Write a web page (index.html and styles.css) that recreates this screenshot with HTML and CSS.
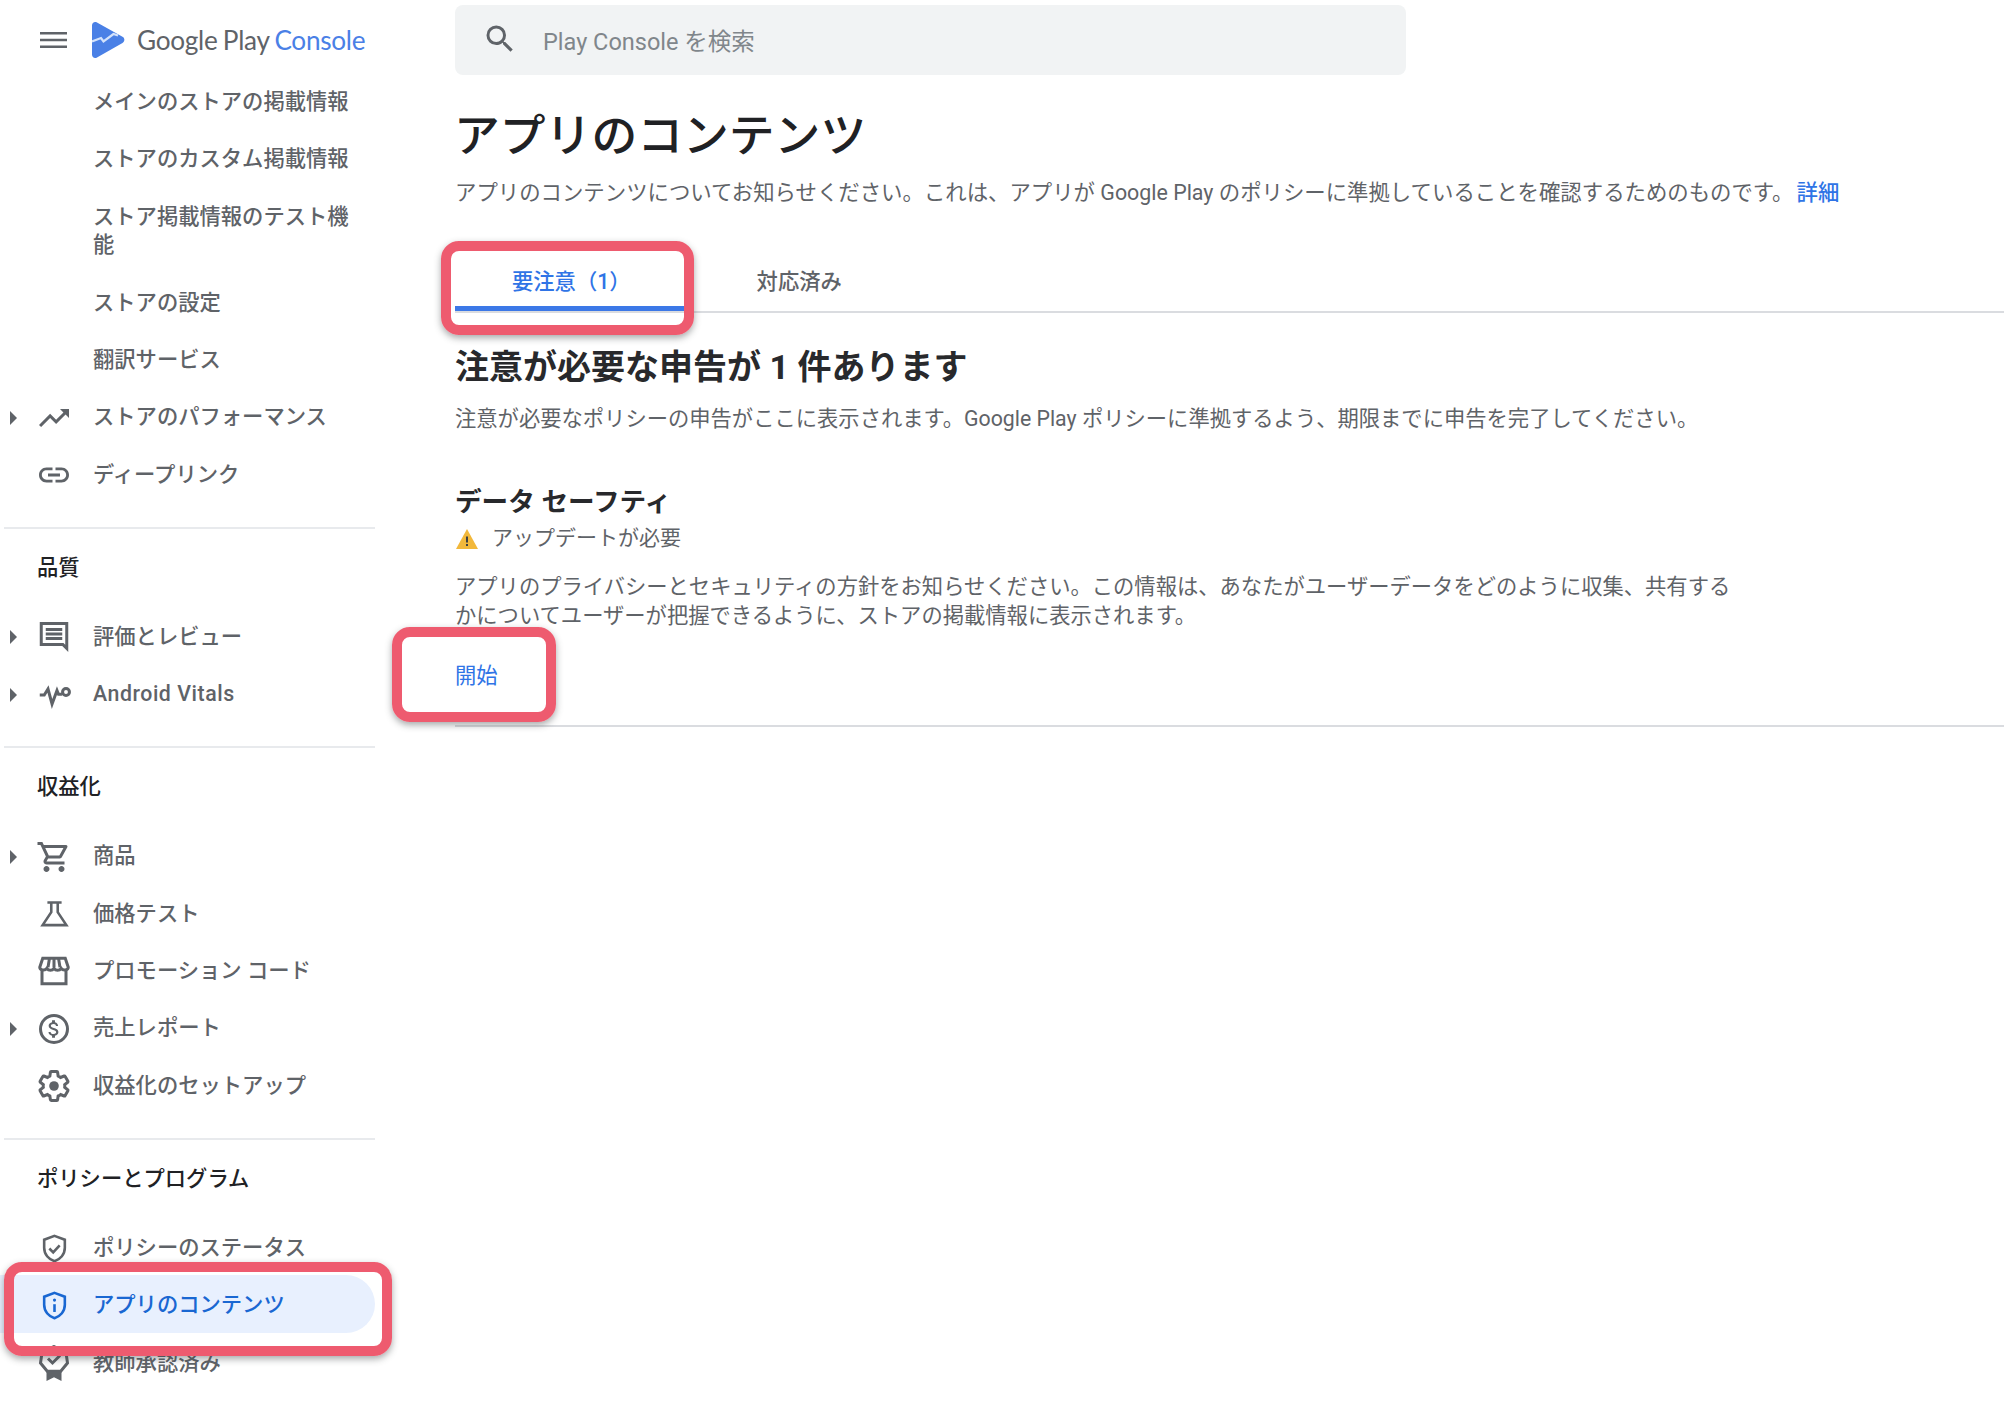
FILE: index.html
```html
<!DOCTYPE html>
<html lang="ja">
<head>
<meta charset="utf-8">
<title>アプリのコンテンツ</title>
<link rel="stylesheet" href="styles.css">
</head>
<body>
<div class="page">
  <aside class="sidebar">
    <header class="brand">
      <svg class="menu-icon" viewBox="0 0 27 18"><path d="M0 1h27v2.4H0zM0 7.8h27v2.4H0zM0 14.6h27V17H0z"/></svg>
      <svg class="logo" viewBox="0 0 33 36"><path d="M0 3.5C0 .8 2.6-.8 5 .6l25.5 14.2c2.5 1.4 2.5 4.7 0 6.1L5 35.400C2.600 36.800 0 35.200 0 32.500z" fill="#4a80e6"/><path d="M0 19.500l9-3.500 2.500 3.500 10-7.500 4.500 1.500" fill="none" stroke="#d3e2fb" stroke-width="2.200"/></svg>
      <span class="wordmark">Google Play <span class="wordmark-accent">Console</span></span>
    </header>
    <nav>
      <a class="nav-item"><span class="arrow-slot"></span><span class="icon-slot"></span><span class="nav-label">メインのストアの掲載情報</span></a>
      <a class="nav-item"><span class="arrow-slot"></span><span class="icon-slot"></span><span class="nav-label">ストアのカスタム掲載情報</span></a>
      <a class="nav-item"><span class="arrow-slot"></span><span class="icon-slot"></span><span class="nav-label">ストア掲載情報のテスト機能</span></a>
      <a class="nav-item"><span class="arrow-slot"></span><span class="icon-slot"></span><span class="nav-label">ストアの設定</span></a>
      <a class="nav-item"><span class="arrow-slot"></span><span class="icon-slot"></span><span class="nav-label">翻訳サービス</span></a>
      <a class="nav-item"><span class="arrow-slot"><i class="arrow"></i></span><span class="icon-slot"><svg class="icon" viewBox="0 0 24 24"><path d="M16 6l2.290 2.290-4.880 4.880-4-4L2 16.590 3.410 18l6-6 4 4 6.300-6.290L22 12V6z"/></svg></span><span class="nav-label">ストアのパフォーマンス</span></a>
      <a class="nav-item"><span class="arrow-slot"></span><span class="icon-slot"><svg class="icon" viewBox="0 0 24 24"><path d="M3.900 12c0-1.710 1.390-3.100 3.100-3.100h4V7H7c-2.760 0-5 2.240-5 5s2.240 5 5 5h4v-1.900H7c-1.710 0-3.100-1.390-3.100-3.100zM8 13h8v-2H8v2zm9-6h-4v1.900h4c1.710 0 3.100 1.390 3.100 3.100s-1.390 3.100-3.100 3.100h-4V17h4c2.760 0 5-2.240 5-5s-2.240-5-5-5z"/></svg></span><span class="nav-label">ディープリンク</span></a>
    </nav>
    <hr class="nav-rule">
    <h3 class="nav-heading">品質</h3>
    <nav>
      <a class="nav-item"><span class="arrow-slot"><i class="arrow"></i></span><span class="icon-slot"><svg class="icon" viewBox="0 0 24 24"><path d="M2.500 2h19v20l-4-4h-15zM4.500 4v12h13.800l1.200 1.200V4zM6.500 6h11v2h-11zM6.500 9h11v2h-11zM6.500 12h11v2h-11z" fill-rule="evenodd"/></svg></span><span class="nav-label">評価とレビュー</span></a>
      <a class="nav-item"><span class="arrow-slot"><i class="arrow"></i></span><span class="icon-slot"><svg class="icon stroke" viewBox="0 0 24 24"><path d="M2.500 12h3l2.500-4 2.700 10 3.300-9 1 2.500h2.300"/><circle cx="20" cy="10" r="2.300"/></svg></span><span class="nav-label nav-label-latin">Android Vitals</span></a>
    </nav>
    <hr class="nav-rule">
    <h3 class="nav-heading">収益化</h3>
    <nav>
      <a class="nav-item"><span class="arrow-slot"><i class="arrow"></i></span><span class="icon-slot"><svg class="icon" viewBox="0 0 24 24"><path d="M15.550 13c.75 0 1.410-.41 1.750-1.030l3.580-6.490c.37-.66-.11-1.480-.87-1.480H5.210l-.94-2H1v2h2l3.600 7.590-1.350 2.440C4.520 15.370 5.480 17 7 17h12v-2H7l1.100-2h7.450zM6.160 6h12.150l-2.760 5H8.530L6.160 6zM7 18c-1.100 0-1.990.9-1.990 2S5.900 22 7 22s2-.9 2-2-.9-2-2-2zm10 0c-1.100 0-1.990.9-1.990 2s.89 2 1.990 2 2-.9 2-2-.9-2-2-2z"/></svg></span><span class="nav-label">商品</span></a>
      <a class="nav-item"><span class="arrow-slot"></span><span class="icon-slot"><svg class="icon icon-small stroke" viewBox="0 0 24 24"><path d="M6.500 3.500h11M9.500 3.500v7.500L2.800 21h18.400l-6.700-10V3.500"/></svg></span><span class="nav-label">価格テスト</span></a>
      <a class="nav-item"><span class="arrow-slot"></span><span class="icon-slot"><svg class="icon stroke" viewBox="0 0 24 24"><path d="M4.500 3.500h15l2 6c0 2-3.400 2.600-4.700.8-1.200 1.700-3.600 1.700-4.800 0-1.200 1.700-3.600 1.700-4.800 0-1.300 1.800-4.700 1.200-4.700-.8zM4 11.500v9h16v-9M9 3.500L8 9.500M15 3.500l1 6M12 3.500v6"/></svg></span><span class="nav-label">プロモーション コード</span></a>
      <a class="nav-item"><span class="arrow-slot"><i class="arrow"></i></span><span class="icon-slot"><svg class="icon" viewBox="0 0 24 24"><path d="M12 2a10 10 0 1 0 0 20 10 10 0 0 0 0-20zm0 2a8 8 0 1 1 0 16 8 8 0 0 1 0-16z"/><path transform="translate(4.200 4.200) scale(.65)" d="M11.800 10.900c-2.270-.59-3-1.200-3-2.150 0-1.090 1.010-1.850 2.700-1.850 1.780 0 2.440.85 2.500 2.100h2.210c-.07-1.720-1.120-3.300-3.210-3.810V3h-3v2.160c-1.940.42-3.500 1.680-3.500 3.610 0 2.310 1.910 3.460 4.700 4.130 2.500.6 3 1.480 3 2.410 0 .69-.49 1.790-2.700 1.790-2.060 0-2.870-.92-2.980-2.100h-2.200c.12 2.190 1.760 3.420 3.680 3.830V21h3v-2.150c1.950-.37 3.500-1.500 3.500-3.550 0-2.840-2.430-3.810-4.700-4.400z"/></svg></span><span class="nav-label">売上レポート</span></a>
      <a class="nav-item"><span class="arrow-slot"></span><span class="icon-slot"><svg class="icon stroke" viewBox="0 0 24 24"><path d="M19.140 12.940c.04-.3.06-.61.06-.94 0-.32-.02-.64-.07-.94l2.030-1.580c.18-.14.23-.41.12-.61l-1.920-3.320c-.12-.22-.37-.29-.59-.22l-2.390.96c-.5-.38-1.030-.7-1.620-.94l-.36-2.540c-.04-.24-.24-.41-.48-.41h-3.840c-.24 0-.43.17-.47.41l-.36 2.540c-.59.24-1.130.57-1.620.94l-2.390-.96c-.22-.08-.47 0-.59.22L2.740 8.870c-.12.21-.08.47.12.61l2.030 1.580c-.05.3-.09.63-.09.94s.02.64.07.94l-2.030 1.580c-.18.14-.23.41-.12.61l1.920 3.320c.12.22.37.29.59.22l2.390-.96c.5.38 1.030.7 1.620.94l.36 2.540c.05.24.24.41.48.41h3.840c.24 0 .44-.17.47-.41l.36-2.540c.59-.24 1.130-.56 1.620-.94l2.390.96c.22.08.47 0 .59-.22l1.920-3.320c.12-.22.07-.47-.12-.61l-2.010-1.580z"/><circle class="solid" cx="12" cy="12" r="3.200"/></svg></span><span class="nav-label">収益化のセットアップ</span></a>
    </nav>
    <hr class="nav-rule">
    <h3 class="nav-heading">ポリシーとプログラム</h3>
    <nav>
      <a class="nav-item"><span class="arrow-slot"></span><span class="icon-slot"><svg class="icon icon-small stroke" viewBox="0 0 24 24"><path d="M12 2.200l8 3v6.300c0 5-3.400 8.900-8 10.300-4.600-1.400-8-5.300-8-10.300V5.200z"/><path d="M8 12l3 3 5-5.500"/></svg></span><span class="nav-label">ポリシーのステータス</span></a>
      <a class="nav-item nav-item-active"><span class="arrow-slot"></span><span class="icon-slot"><svg class="icon icon-small stroke" viewBox="0 0 24 24"><path d="M12 2.200l8 3v6.300c0 5-3.400 8.900-8 10.300-4.600-1.400-8-5.300-8-10.300V5.200z"/><path d="M12 11v6"/><circle class="solid" cx="12" cy="7.800" r="1.200"/></svg></span><span class="nav-label">アプリのコンテンツ</span></a>
      <a class="nav-item"><span class="arrow-slot"></span><span class="icon-slot"><svg class="icon stroke" viewBox="0 0 24 24"><path d="M12 1L20 5l1 7-4.500 5.500h-9L3 12l1-7z"/><path d="M8 9l3 3 5-5"/><path class="solid" d="M7 17.500h10V24l-5-2.500L7 24z"/></svg></span><span class="nav-label">教師承認済み</span></a>
    </nav>
  </aside>

  <main class="content">
    <div class="search">
      <svg class="search-icon" viewBox="0 0 24 24"><path d="M15.500 14h-.79l-.28-.27A6.470 6.470 0 0 0 16 9.500 6.500 6.500 0 1 0 9.500 16c1.610 0 3.090-.59 4.230-1.570l.27.28v.79l5 4.990L20.490 19l-4.990-5zm-6 0C7.010 14 5 11.990 5 9.500S7.010 5 9.500 5 14 7.010 14 9.500 11.990 14 9.500 14z"/></svg>
      <span class="search-text">Play Console を検索</span>
    </div>
    <h1 class="page-title">アプリのコンテンツ</h1>
    <p class="lead">アプリのコンテンツについてお知らせください。これは、アプリが Google Play のポリシーに準拠していることを確認するためのものです。<a class="link link-detail">詳細</a></p>
    <div class="tabs">
      <a class="tab tab-active">要注意（1）</a>
      <a class="tab">対応済み</a>
    </div>
    <h2 class="section-title">注意が必要な申告が 1 件あります</h2>
    <p class="section-lead">注意が必要なポリシーの申告がここに表示されます。Google Play ポリシーに準拠するよう、期限までに申告を完了してください。</p>
    <section class="task">
      <h3 class="task-title">データ セーフティ</h3>
      <div class="task-status">
        <svg class="warn-icon" viewBox="0 0 22 20"><path d="M11 0l11 20H0z" fill="#f2b83b"/><path d="M10 7.500h2v6h-2zM10 15h2v2h-2z" fill="#3c4043"/></svg>
        <span>アップデートが必要</span>
      </div>
      <p class="task-text">アプリのプライバシーとセキュリティの方針をお知らせください。この情報は、あなたがユーザーデータをどのように収集、共有するかについてユーザーが把握できるように、ストアの掲載情報に表示されます。</p>
      <a class="link task-action">開始</a>
    </section>
  </main>

  <div class="callout callout-nav"></div>
  <div class="callout callout-tab"></div>
  <div class="callout callout-start"></div>
</div>
</body>
</html>
```

FILE: styles.css
```css
* { box-sizing: border-box; }
html, body { margin: 0; padding: 0; background: #fff; }
body {
  font-family: Roboto, "Noto Sans CJK JP", sans-serif;
  font-size: 21.300px;
  color: #5f6368;
  height: 1406px;
  overflow: hidden;
}
a { color: inherit; text-decoration: none; }
p, h1, h2, h3 { margin: 0; }

.page { position: relative; display: flex; height: 1406px; overflow: hidden; }

.sidebar { width: 375px; flex: none; }
.brand { height: 72px; display: flex; align-items: center; padding: 7px 0 0 40px; }
.menu-icon { width: 27px; height: 18px; fill: #5f6368; flex: none; }
.logo { width: 33px; height: 36px; margin-left: 25px; flex: none; }
.wordmark { margin-left: 12px; font-family: Lato, sans-serif; font-size: 26.200px; color: #5f6368; white-space: nowrap; letter-spacing: -.3px; word-spacing: -1px; }
.wordmark-accent { color: #4a80e6; }

.nav-item { display: flex; align-items: center; padding: 15.800px 16px 12.900px 0; font-weight: 500; line-height: 28.700px; }
.arrow-slot { width: 36px; flex: none; display: flex; padding-left: 10px; }
.arrow { width: 0; height: 0; border-left: 7px solid #5f6368; border-top: 7px solid transparent; border-bottom: 7px solid transparent; }
.icon-slot { width: 36px; height: 28px; flex: none; display: flex; align-items: center; justify-content: center; margin-right: 21px; }
.icon { width: 36px; height: 36px; flex: none; fill: #5f6368; }
.icon-small { width: 31px; height: 31px; }
.icon.stroke { fill: none; stroke: #5f6368; stroke-width: 2; }
.icon .solid { fill: #5f6368; stroke: none; }
.nav-label { flex: 1; }
.nav-label-latin { letter-spacing: .55px; }
.nav-item-active { background: #e8f0fe; color: #1967d2; border-radius: 0 29px 29px 0; }
.nav-item-active .icon.stroke { stroke: #1967d2; }
.nav-item-active .icon .solid { fill: #1967d2; }

.nav-rule { margin: 24.300px 0 0 4px; border: 0; border-top: 2px solid #e8eaed; height: 0; }
.nav-heading { height: 78.300px; display: flex; align-items: center; padding: 0 0 1px 37px; font-size: 21.300px; font-weight: 500; line-height: 29px; color: #202124; }

.content { flex: 1; min-width: 0; margin-left: 80px; }
.search { width: 951px; height: 70px; margin-top: 5px; display: flex; align-items: center; padding-left: 27px; background: #f1f3f4; border-radius: 8px; }
.search-icon { width: 36px; height: 36px; fill: #5f6368; flex: none; margin-top: -3px; }
.search-text { margin-left: 25px; font-size: 23.500px; color: #80868b; }

.page-title { margin: 32px 0 0 -1px; font-size: 45.800px; line-height: 60px; font-weight: 500; color: #202124; }
.lead { margin-top: 11px; line-height: 29px; white-space: nowrap; font-size: 21.400px; }
.link { color: #2f74e6; }
.link-detail { margin-left: 3px; font-weight: 500; }

.tabs { display: flex; gap: 12px; margin-top: 43px; height: 63px; border-bottom: 2px solid #dadce0; }
.tab { height: 61px; padding: 17px 57px 0; line-height: 29px; font-weight: 500; }
.tab-active { color: #2f74e6; border-bottom: 5px solid #3b78e7; }

.section-title { margin-top: 32px; font-size: 34px; line-height: 44px; font-weight: 700; color: #28292c; }
.section-lead { margin-top: 15px; line-height: 29px; white-space: nowrap; }

.task { margin-top: 51px; padding-bottom: 35px; border-bottom: 2px solid #dadce0; }
.task-title { font-size: 26.600px; line-height: 36px; font-weight: 700; color: #28292c; }
.task-status { display: flex; align-items: center; margin-top: 4px; line-height: 29px; font-size: 21px; }
.warn-icon { width: 22px; height: 20px; margin-left: 1px; flex: none; }
.task-status span { margin-left: 14px; }
.task-text { width: 1280px; margin-top: 20px; line-height: 28.500px; }
.task-action { display: block; margin-top: 31px; line-height: 29px; }

.callout { position: absolute; border: 10px solid #ee5b6f; border-radius: 18px; box-shadow: 0 3px 7px rgba(60, 64, 67, .45); pointer-events: none; }
.callout-nav { left: 4px; top: 1262px; width: 388px; height: 94px; }
.callout-tab { left: 441px; top: 241px; width: 253px; height: 94px; }
.callout-start { left: 392px; top: 627px; width: 164px; height: 95px; }
```
